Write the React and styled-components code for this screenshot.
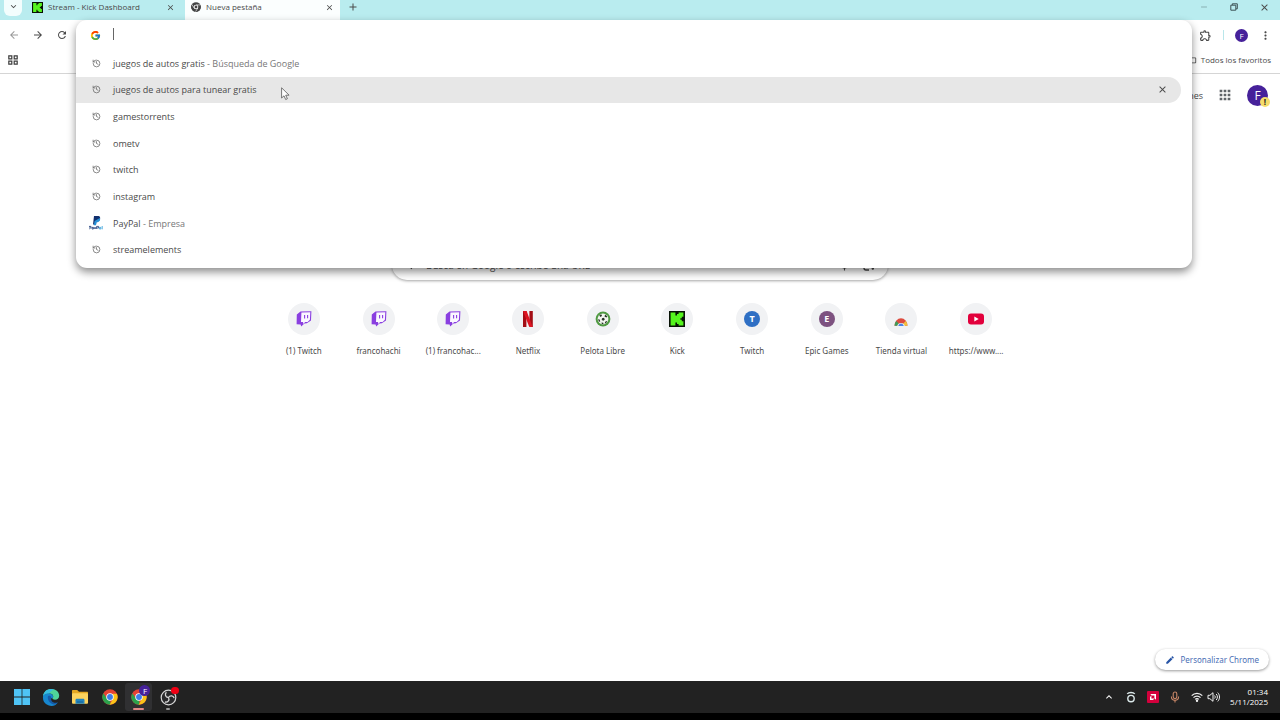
import React, { useState } from "react";
import styled, { createGlobalStyle } from "styled-components";
import { History } from "lucide-react";
import { FcGoogle } from "react-icons/fc";
import {
  MdArrowBack,
  MdArrowForward,
  MdRefresh,
  MdClose,
  MdAdd,
  MdExpandMore,
  MdExpandLess,
  MdOutlineExtension,
  MdMoreVert,
  MdApps,
  MdFolderOpen,
  MdEdit,
  MdMic,
  MdSearch,
  MdRemove,
} from "react-icons/md";

const suggestions = [
  { text: "juegos de autos gratis", extra: "Búsqueda de Google" },
  { text: "juegos de autos para tunear gratis", active: true },
  { text: "gamestorrents" },
  { text: "ometv" },
  { text: "twitch" },
  { text: "instagram" },
  { text: "PayPal", extra: "Empresa", icon: "paypal" },
  { text: "streamelements" },
];

const shortcuts = [
  { name: "(1) Twitch", icon: <TwitchIcon /> },
  { name: "francohachi", icon: <TwitchIcon /> },
  { name: "(1) francohac...", icon: <TwitchIcon /> },
  { name: "Netflix", icon: <NetflixIcon /> },
  { name: "Pelota Libre", icon: <BallIcon /> },
  { name: "Kick", icon: <KickIcon size={16} /> },
  { name: "Twitch", letter: "T", color: "#2f6fc4" },
  { name: "Epic Games", letter: "E", color: "#7d5280" },
  { name: "Tienda virtual", icon: <StoreIcon /> },
  { name: "https://www....", icon: <YoutubeIcon /> },
];

function TwitchIcon() {
  return (
    <svg width="16" height="16" viewBox="0 0 16 16">
      <path d="M4.5 0.5 15.4 0.2 15 9.4 10.8 12.2 8.4 12.4 5.2 15.6 4.6 13.6 0.6 13.2 0.8 3.4Z" fill="#8a3fe0" />
      <path d="M5.4 1.6 14.3 1.3 13.9 8.8 11.6 10.9 9.2 11 7.1 12.9 7.1 11.1 5 11.1Z" fill="#fbf8ff" />
      <path d="M8.6 4v3.4M11.6 3.9v3.4" stroke="#8a3fe0" strokeWidth="1.1" />
    </svg>
  );
}

function NetflixIcon() {
  return (
    <svg width="16" height="16" viewBox="0 0 16 16">
      <path d="M3 0h3.400v16l-3.400 .2zM9.400 0h3.400v16l-3.400-.4z" fill="#a30d15" />
      <path d="M3 0h3.600l6.200 16.200-3.600-.4z" fill="#dc1422" />
    </svg>
  );
}

function BallIcon() {
  return (
    <svg width="16" height="16" viewBox="0 0 16 16">
      <circle cx="8" cy="8" r="7.4" fill="#4f9a42" />
      <circle cx="8" cy="8" r="5.4" fill="#f2f5ee" />
      <path
        d="M4.200 4.600l2-1.400.8 1.500-1.300 1.400zM10 3.600l2.200 1.700-.6 1.300-2-.9zM7 7.200l2-.4.8 1.700-1.400 1.300-1.700-.9zM3 8.200l1.600.4.7 1.900-1.300.3zM10.200 10.800l2.100-1-.9 2-1.700.9zM6.500 11.600l1.700.2.4 1.500-1.800-.2z"
        fill="#273427"
      />
    </svg>
  );
}

function KickIcon({ size }) {
  return (
    <svg width={size} height={size} viewBox="0 0 16 16">
      <rect width="16" height="16" fill="#081206" />
      <path d="M1.6 1.6h4.8v3h1.6V3h1.6V1.6h4.8v4.2h-1.6v1.4h-1.4v1.6h1.4v1.4h1.6v4.2H9.6V13H8v-1.6H6.4v3H1.6z" fill="#55f51d" />
    </svg>
  );
}

function StoreIcon() {
  return (
    <svg width="16" height="16" viewBox="0 0 16 16">
      <path d="M1.500 14.800a6.500 7.500 0 0 1 13 0z" fill="#dd4b3e" />
      <path d="M1.500 14.800a6.500 7.500 0 0 1 1.700-4.900l3 3-1.400 1.900z" fill="#3f9b59" />
      <path d="M14.500 14.800a6.500 7.500 0 0 0-1.700-4.900l-3 3 1.400 1.900z" fill="#f2c13c" />
      <path d="M4.200 15a3.900 4 0 0 1 7.600 0z" fill="#f1f3f4" />
      <path d="M5.200 15a2.900 3.400 0 0 1 5.600 0z" fill="#4b83e6" />
    </svg>
  );
}

function YoutubeIcon() {
  return (
    <svg width="16" height="16" viewBox="0 0 16 16">
      <rect y="2.6" width="16" height="11" rx="3" fill="#e2003c" />
      <path d="m6.3 5.6 4.4 2.5-4.4 2.5z" fill="#fff" />
    </svg>
  );
}

function ChromeIcon({ size, mono }) {
  const c = mono
    ? ["#444", "#444", "#444", "#444"]
    : ["#e44335", "#fbc418", "#2ba24c", "#3d7eea"];
  return (
    <svg width={size} height={size} viewBox="0 0 24 24">
      <circle cx="12" cy="12" r="11.5" fill={c[0]} />
      <path d="M2 6.2 8 15l4 2 1 6.4A11.5 11.5 0 0 1 2 6.2Z" fill={c[2]} />
      <path d="M22.3 7A11.5 11.5 0 0 1 11.4 23.5L17 14l-1-7Z" fill={c[1]} />
      {mono && <path d="M12 7h10.5M7.5 14.5 2 5.8M16.3 14.5 11 23" stroke="#fff" strokeWidth="1.5" />}
      <circle cx="12" cy="12" r="5.6" fill="#fff" />
      <circle cx="12" cy="12" r={mono ? 3.4 : 4.4} fill={c[3]} />
    </svg>
  );
}

function PaypalIcon() {
  return (
    <svg width="14" height="14" viewBox="0 0 14 14">
      <path d="M5 0h4.6c1.9.4 2 2.7.9 4.2-.7.9-1.8 1-3 1L7 8.4H4z" fill="#12306e" />
      <path d="M10.9 2c.8 2.4-.7 4.2-3.4 4.3L7 9.2H4.8L5.6 5z" fill="#2790d6" />
      <path d="M0 13.4v-3h2v1.6H.8M3 13v-1.6h1.4V13zM5 11l1 2 1-2M7.6 13v-2.6h2v1.6H8" stroke="#1b3a78" strokeWidth=".8" fill="none" />
      <path d="M10.4 13v-1.6h1.4V13zM13.2 10v3.3" stroke="#2b9ad8" strokeWidth=".8" fill="none" />
    </svg>
  );
}

function WindowsIcon() {
  return (
    <svg width="16" height="16" viewBox="0 0 16 16">
      <path d="M0 0h7.6v7.6H0zM8.4 0H16v7.6H8.4zM0 8.4h7.6V16H0zM8.4 8.4H16V16H8.4z" fill="#4fc3f5" />
    </svg>
  );
}

function EdgeIcon() {
  return (
    <svg width="18" height="18" viewBox="0 0 18 18">
      <path d="M1 8.4C1.6 3.5 5.2 1 9.4 1c4.700 0 7.900 3.200 7.800 6.700 0 2.500-1.900 4-4.200 4-1.600 0-2.500-.5-2.500-1.200 0-.6.700-.8.700-2 0-1.700-1.500-3-3.800-3C4.300 5.500 2 6.500 1 8.400Z" fill="#4fd49a" />
      <path d="M1 8.400C1.600 3.500 5.200 1 9.400 1c1 0 2 .2 3 .6-3 .5-4.400 2.700-5 4C4.500 5.500 2 6.500 1 8.400Z" fill="#37bde2" />
      <path d="M1 8.800c0-2 3-3.700 6.200-3.300 2.300.2 4 1.500 4 3 0 1.200-.7 1.400-.7 2-3-1.500-4 3 1.500 4.400 1.600.3 3-.1 3.800-.5A8.200 8.200 0 0 1 1 8.800Z" fill="#1787cf" />
      <path d="M5.800 9.200c0 3.800 3 7 6.500 7.300 1.600-.5 2.700-1.200 3.500-2.100-4.500 1.500-7.400-1.300-6.600-5.200-.7-2-3.400-1.900-3.400 0Z" fill="#165aa8" />
    </svg>
  );
}

function ExplorerIcon() {
  return (
    <svg width="18" height="16" viewBox="0 0 18 16">
      <path d="M1 2c0-.7.400-1 1-1h4.200L8 2.800h8c.7 0 1 .4 1 1V9H1z" fill="#e5a823" />
      <rect x="1" y="4.200" width="16" height="10.600" rx="1" fill="#fcd35e" />
      <path d="M4.500 14.800v-3.600c0-1 .5-1.500 1.300-1.500h6.400c.8 0 1.300.5 1.300 1.500v3.600z" fill="#2384bd" />
      <path d="M6 12.500h6v1H6z" fill="#145f94" />
    </svg>
  );
}

function ObsIcon() {
  return (
    <svg width="17" height="17" viewBox="0 0 17 17">
      <circle cx="8.500" cy="8.500" r="7.300" fill="#29292b" stroke="#d6d6d6" strokeWidth="1.200" />
      <path
        d="M8.500 8.500C5.200 8.300 4.600 5 6.400 3.200M8.500 8.500c1.800-2.800 5-1.800 5.600.7M8.500 8.500c1.500 3-1 5.200-3.500 4.500"
        fill="none"
        stroke="#d6d6d6"
        strokeWidth="1.300"
      />
    </svg>
  );
}

function HeadIcon() {
  return (
    <svg width="12" height="12" viewBox="0 0 12 12" fill="none" stroke="#dce9ea" strokeWidth="1.400">
      <circle cx="6" cy="7.600" r="3.200" />
      <path d="M2.200 2.900C3.800 1 8.200 1 9.800 2.900" />
    </svg>
  );
}

function AmdIcon() {
  return (
    <svg width="12" height="12" viewBox="0 0 12 12">
      <rect width="12" height="12" rx="1" fill="#d3003c" />
      <path d="M3.200 3h5.800v5.800L7.400 7.200V4.600H4.800zM3 6l1.400-1.400v3h3L6 9H3z" fill="#fff" />
    </svg>
  );
}

function MicIcon() {
  return (
    <svg width="12" height="12" viewBox="0 0 12 12" fill="none" stroke="#c98767" strokeWidth="1.100">
      <rect x="4.200" y="1" width="3.600" height="6.600" rx="1.800" />
      <path d="M2.400 5.600c0 5 7.200 5 7.200 0M6 9.300v2.200" />
    </svg>
  );
}

function WifiIcon() {
  return (
    <svg width="12" height="12" viewBox="0 0 12 12" fill="none" stroke="#f0f0f0" strokeWidth="1.200">
      <path d="M.7 4.700C3.500 1.500 8.500 1.500 11.300 4.700M2.500 6.600c2-2.100 5-2.100 7 0M4.200 8.400c1-1.100 2.600-1.100 3.600 0" />
      <circle cx="6" cy="9.700" r=".6" fill="#f0f0f0" />
    </svg>
  );
}

function VolumeIcon() {
  return (
    <svg width="13" height="12" viewBox="0 0 13 12" fill="none" stroke="#f0f0f0">
      <path d="M1 4.300h1.900L6 1.700v8.600L2.900 7.700H1z" />
      <path d="M7.600 4.500c.8.800.8 2.200 0 3M9.200 3c1.600 1.700 1.600 4.300 0 6M10.700 1.600c2.400 2.500 2.400 6.300 0 8.800" />
    </svg>
  );
}

function LensIcon() {
  return (
    <svg width="12" height="12" viewBox="0 0 12 12" fill="none" stroke="#444" strokeWidth="1.300">
      <path d="M1 4V3c0-1.200.800-2 2-2h6c1.200 0 2 .8 2 2v3M1 7.500V9c0 1.200.8 2 2 2h3" />
      <circle cx="6" cy="6" r="1.800" />
      <circle cx="9.800" cy="9.600" r=".6" fill="#444" />
    </svg>
  );
}

function RestoreIcon() {
  return (
    <svg width="8" height="8" viewBox="0 0 8 8" fill="none" stroke="#3c5254">
      <path d="M.8 2.200h5v5h-5zM2.300 2V.8h5v5H6" />
    </svg>
  );
}

function GridIcon() {
  return (
    <svg width="10" height="10" viewBox="0 0 10 10" fill="none" stroke="#3d3d3d" strokeWidth="1.200">
      <path d="M.8.8h3v3h-3zM6.200.8h3v3h-3zM.8 6.200h3v3h-3zM6.200 6.200h3v3h-3z" />
    </svg>
  );
}

function Pointer() {
  return (
    <Cursor width="9" height="14" viewBox="0 0 9 14">
      <path d="M.6.800v10.200l2.400-2.200 1.700 3.700 1.700-.8-1.700-3.500h3.400z" fill="#fff" stroke="#555" strokeWidth=".8" />
    </Cursor>
  );
}

function App() {
  const [query, setQuery] = useState("");

  return (
    <Screen>
      <GlobalStyle />
      <TabStrip>
        <TabSearch aria-label="Buscar pestañas">
          <MdExpandMore size={11} />
        </TabSearch>
        <Tab>
          <KickIcon size={11} />
          <TabTitle>Stream - Kick Dashboard</TabTitle>
          <IconButton aria-label="Cerrar pestaña">
            <MdClose size={9} />
          </IconButton>
        </Tab>
        <Tab $active>
          <ChromeIcon size={10} mono />
          <TabTitle>Nueva pestaña</TabTitle>
          <IconButton aria-label="Cerrar pestaña">
            <MdClose size={9} />
          </IconButton>
        </Tab>
        <NewTab aria-label="Nueva pestaña">
          <MdAdd size={12} />
        </NewTab>
        <WindowButtons>
          <IconButton aria-label="Minimizar">
            <MdRemove size={10} color="#7fa3a6" />
          </IconButton>
          <IconButton aria-label="Restaurar">
            <RestoreIcon />
          </IconButton>
          <IconButton aria-label="Cerrar">
            <MdClose size={11} />
          </IconButton>
        </WindowButtons>
      </TabStrip>

      <Toolbar>
        <NavButtons>
          <IconButton aria-label="Atrás">
            <MdArrowBack size={12} color="#999" />
          </IconButton>
          <IconButton aria-label="Adelante">
            <MdArrowForward size={12} />
          </IconButton>
          <IconButton aria-label="Recargar">
            <MdRefresh size={12} />
          </IconButton>
        </NavButtons>
        <ToolbarRight>
          <IconButton aria-label="Extensiones">
            <MdOutlineExtension size={13} />
          </IconButton>
          <Divider />
          <Avatar>F</Avatar>
          <IconButton aria-label="Menú">
            <MdMoreVert size={13} />
          </IconButton>
        </ToolbarRight>
      </Toolbar>

      <Bookmarks>
        <IconButton aria-label="Aplicaciones">
          <GridIcon />
        </IconButton>
        <Favorites href="#favoritos">
          <MdFolderOpen size={10} />
          Todos los favoritos
        </Favorites>
      </Bookmarks>

      <Omnibox>
        <OmniboxBar>
          <FcGoogle size={11} />
          <Caret />
          <OmniboxInput
            aria-label="Barra de direcciones"
            value={query}
            onChange={(e) => setQuery(e.target.value)}
          />
        </OmniboxBar>
        <Suggestions>
          {suggestions.map((item) => (
            <Suggestion key={item.text} $active={item.active}>
              <SuggestionIcon>
                {item.icon ? <PaypalIcon /> : <History size={9} />}
              </SuggestionIcon>
              <span>
                {item.text}
                {item.extra && <Extra> - {item.extra}</Extra>}
              </span>
              {item.active && (
                <RemoveButton aria-label="Quitar sugerencia">
                  <MdClose size={11} />
                </RemoveButton>
              )}
            </Suggestion>
          ))}
        </Suggestions>
        <Pointer />
      </Omnibox>

      <Page>
        <PageHeader>
          <PageLink href="#imagenes">Imágenes</PageLink>
          <IconButton aria-label="Aplicaciones de Google">
            <MdApps size={16} color="#5f6368" />
          </IconButton>
          <Account aria-label="Cuenta">
            F<Warning>!</Warning>
          </Account>
        </PageHeader>
        <SearchBox>
          <MdSearch size={12} />
          <SearchInput
            aria-label="Buscar en Google"
            placeholder="Busca en Google o escribe una URL"
          />
          <MdMic size={13} />
          <LensIcon />
        </SearchBox>
        <Shortcuts>
          {shortcuts.map((s) => (
            <Shortcut key={s.name} href="#abrir">
              <Tile>{s.letter ? <Letter $color={s.color}>{s.letter}</Letter> : s.icon}</Tile>
              {s.name}
            </Shortcut>
          ))}
        </Shortcuts>
        <Customize>
          <MdEdit size={10} color="#2855a6" />
          Personalizar Chrome
        </Customize>
      </Page>

      <Taskbar>
        <TaskApps>
          <TaskButton aria-label="Inicio">
            <WindowsIcon />
          </TaskButton>
          <TaskButton aria-label="Edge">
            <EdgeIcon />
          </TaskButton>
          <TaskButton aria-label="Explorador">
            <ExplorerIcon />
          </TaskButton>
          <TaskButton aria-label="Chrome">
            <ChromeIcon size={16} />
          </TaskButton>
          <TaskButton aria-label="Chrome, perfil F" $active>
            <ChromeIcon size={16} />
            <ProfileBadge>F</ProfileBadge>
            <Running $wide />
          </TaskButton>
          <TaskButton aria-label="OBS Studio">
            <ObsIcon />
            <RecordBadge />
            <Running />
          </TaskButton>
        </TaskApps>
        <Tray>
          <MdExpandLess size={12} />
          <HeadIcon />
          <AmdIcon />
          <MicIcon />
          <Network>
            <WifiIcon />
            <VolumeIcon />
          </Network>
          <Clock>
            <span>01:34</span>
            <span>5/11/2025</span>
          </Clock>
        </Tray>
      </Taskbar>
    </Screen>
  );
}

const GlobalStyle = createGlobalStyle`
  * {
    box-sizing: border-box;
  }
  body {
    margin: 0;
    font-family: "Open Sans", "Noto Sans", sans-serif;
    font-size: 9px;
    color: #4a4a4a;
    background: #fff;
  }
  button, input {
    font: inherit;
    color: inherit;
    border: none;
    background: none;
    padding: 0;
    outline: none;
  }
  a {
    color: inherit;
    text-decoration: none;
  }
  svg {
    flex-shrink: 0;
  }
`;

const Screen = styled.div`
  position: relative;
  display: flex;
  flex-direction: column;
  min-height: 100vh;
`;

const IconButton = styled.button`
  display: flex;
  align-items: center;
  justify-content: center;
`;

const TabStrip = styled.div`
  display: flex;
  height: 20px;
  background: #b9ecef;
`;

const TabSearch = styled(IconButton)`
  width: 18px;
  height: 16px;
  margin: 0 4px;
  padding-bottom: 3px;
  background: #f3fdfd;
  border-radius: 0 0 6px 6px;
`;

const Tab = styled.div`
  display: flex;
  align-items: center;
  gap: 5px;
  width: ${(p) => (p.$active ? "155px" : "159px")};
  padding: 0 ${(p) => (p.$active ? "6px" : "10px")} 6px 6px;
  background: ${(p) => (p.$active ? "#fbfefe" : "#b9ecef")};
`;

const TabTitle = styled.span`
  flex: 1;
  font-size: 8px;
  line-height: 12px;
  white-space: nowrap;
`;

const NewTab = styled(IconButton)`
  width: 26px;
  height: 13px;
`;

const WindowButtons = styled.div`
  display: flex;
  align-items: center;
  gap: 21px;
  margin-left: auto;
  padding: 0 10px 6px 0;
`;

const Toolbar = styled.div`
  display: flex;
  align-items: center;
  justify-content: space-between;
  height: 30px;
  padding: 0 8px;
`;

const NavButtons = styled.div`
  display: flex;
  gap: 12px;
`;

const ToolbarRight = styled.div`
  display: flex;
  align-items: center;
  gap: 11px;
`;

const Divider = styled.span`
  width: 1px;
  height: 10px;
  background: #b9e6ea;
`;

const Avatar = styled.button`
  width: 13px;
  height: 13px;
  border-radius: 50%;
  background: #46219a;
  color: #fff;
  font-size: 8px;
  line-height: 13px;
`;

const Bookmarks = styled.div`
  display: flex;
  align-items: center;
  justify-content: space-between;
  height: 24px;
  padding: 0 9px 4px 8px;
  border-bottom: 1px solid #d5d5d5;
`;

const Favorites = styled.a`
  display: flex;
  align-items: center;
  gap: 4px;
  font-size: 8px;
`;

const Omnibox = styled.div`
  position: absolute;
  z-index: 2;
  top: 20px;
  left: 76px;
  right: 88px;
  padding-bottom: 5px;
  background: #fff;
  border-radius: 11px;
  box-shadow: 0 4px 8px rgba(0, 0, 0, 0.45);
`;

const OmniboxBar = styled.div`
  display: flex;
  align-items: center;
  height: 30px;
  padding-left: 14px;
`;

const Caret = styled.span`
  width: 1px;
  height: 12px;
  margin-left: 12px;
  margin-bottom: 2px;
  background: #666;
`;

const OmniboxInput = styled.input`
  flex: 1;
`;

const Suggestions = styled.ul`
  display: grid;
  grid-template-rows: repeat(8, 1fr);
  height: 213px;
  margin: 0 11px 0 0;
  padding: 0;
  list-style: none;
`;

const Suggestion = styled.li`
  display: flex;
  align-items: center;
  padding: 0 13px 0 12px;
  border-radius: 0 14px 14px 0;
  background: ${(p) => (p.$active ? "#e7e7e7" : "transparent")};
`;

const SuggestionIcon = styled.span`
  display: flex;
  justify-content: center;
  width: 16px;
  margin-right: 9px;
  color: #666;
`;

const Extra = styled.span`
  color: #777;
`;

const RemoveButton = styled(IconButton)`
  margin-left: auto;
`;

const Cursor = styled.svg`
  position: absolute;
  top: 67px;
  left: 205px;
`;

const Page = styled.main`
  display: flex;
  flex: 1;
  flex-direction: column;
  align-items: center;
`;

const PageHeader = styled.div`
  display: flex;
  align-items: center;
  align-self: flex-end;
  gap: 14px;
  height: 42px;
  padding-right: 12px;
`;

const PageLink = styled.a`
  font-size: 9px;
`;

const Account = styled.button`
  position: relative;
  width: 21px;
  height: 21px;
  border-radius: 50%;
  background: #46219a;
  color: #fff;
  font-size: 12px;
  line-height: 21px;
`;

const Warning = styled.span`
  position: absolute;
  right: -2px;
  bottom: -1px;
  width: 10px;
  height: 10px;
  border-radius: 50%;
  background: #f5dd6b;
  color: #222;
  font-size: 8px;
  font-weight: bold;
  line-height: 10px;
`;

const SearchBox = styled.div`
  display: flex;
  align-items: center;
  gap: 12px;
  width: 496px;
  height: 30px;
  margin-top: 134px;
  padding: 0 13px 0 10px;
  border-radius: 15px;
  background: #fff;
  box-shadow: 0 1px 3px rgba(0, 0, 0, 0.35);
`;

const SearchInput = styled.input`
  flex: 1;
  font-size: 10px;

  &::placeholder {
    color: #555;
  }
`;

const Shortcuts = styled.nav`
  display: grid;
  grid-template-columns: repeat(10, 1fr);
  width: 747px;
  margin-top: 23px;
`;

const Shortcut = styled.a`
  display: flex;
  flex-direction: column;
  align-items: center;
  gap: 10px;
  font-family: "Noto Sans", sans-serif;
  font-size: 8px;
  line-height: 12px;
  white-space: nowrap;
`;

const Tile = styled.span`
  display: flex;
  align-items: center;
  justify-content: center;
  width: 32px;
  height: 32px;
  border-radius: 50%;
  background: #f1f2f4;
`;

const Letter = styled.span`
  width: 16px;
  height: 16px;
  border-radius: 50%;
  background: ${(p) => p.$color};
  color: #fff;
  font-size: 9px;
  font-weight: bold;
  line-height: 16px;
  text-align: center;
`;

const Customize = styled.button`
  display: flex;
  align-items: center;
  align-self: flex-end;
  gap: 6px;
  height: 21px;
  margin: auto 11px 11px 0;
  padding: 0 10px;
  border-radius: 11px;
  background: #fff;
  box-shadow: 0 1px 3px rgba(0, 0, 0, 0.4);
  color: #4a6fb5;
  font-family: "Noto Sans", sans-serif;
  font-size: 8px;
`;

const Taskbar = styled.footer`
  display: flex;
  align-items: center;
  justify-content: space-between;
  height: 39px;
  padding: 0 12px 0 7px;
  background: #222;
  border-bottom: 7px solid #000;
`;

const TaskApps = styled.div`
  display: grid;
  grid-template-columns: repeat(6, 1fr);
  width: 176px;
  justify-items: center;
`;

const TaskButton = styled(IconButton)`
  position: relative;
  width: 27px;
  height: 28px;
  border-radius: 3px;
  background: ${(p) => (p.$active ? "#303032" : "transparent")};
`;

const ProfileBadge = styled.span`
  position: absolute;
  top: 2px;
  right: 2px;
  width: 11px;
  height: 11px;
  border-radius: 50%;
  background: #46219a;
  color: #fff;
  font-size: 8px;
  line-height: 11px;
`;

const RecordBadge = styled.span`
  position: absolute;
  top: 4px;
  right: 3px;
  width: 8px;
  height: 7px;
  border-radius: 4px;
  background: #f00014;
`;

const Running = styled.span`
  position: absolute;
  bottom: 1px;
  width: ${(p) => (p.$wide ? "11px" : "4px")};
  height: 2px;
  border-radius: 1px;
  background: ${(p) => (p.$wide ? "#e58a86" : "#999")};
`;

const Tray = styled.div`
  display: flex;
  align-items: center;
  gap: 10px;
  color: #fff;
`;

const Network = styled.div`
  display: flex;
  align-items: center;
  gap: 4px;
`;

const Clock = styled.div`
  display: flex;
  flex-direction: column;
  align-items: flex-end;
  font-size: 8px;
  line-height: 10px;
`;

export default App;
